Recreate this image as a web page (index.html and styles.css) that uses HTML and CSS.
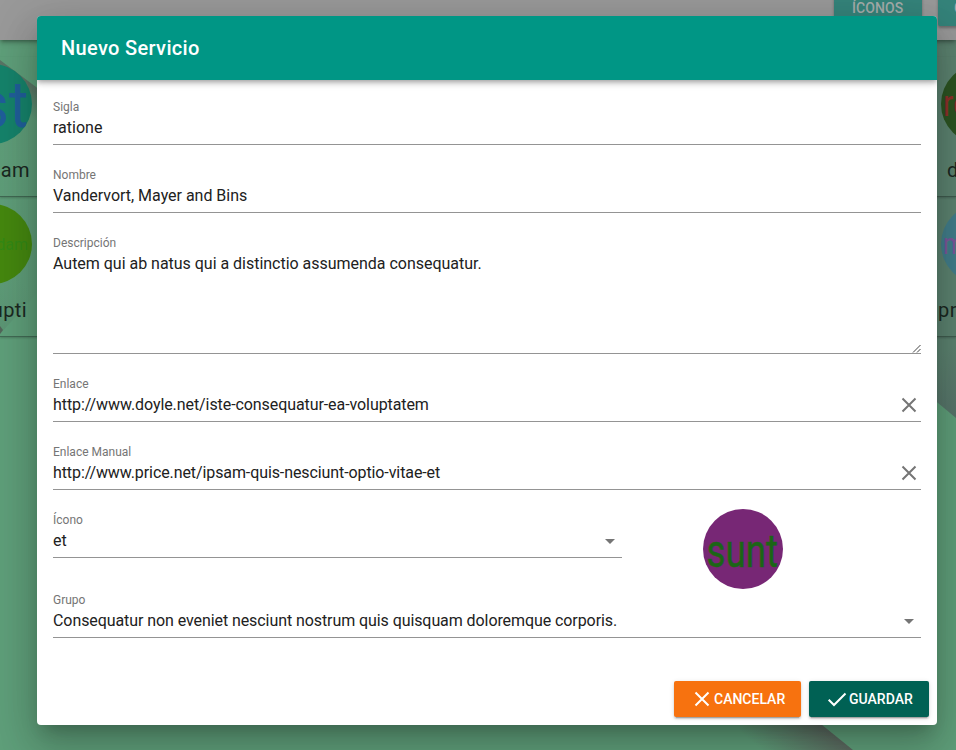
FILE: index.html
```html
<!DOCTYPE html>
<html lang="es">
<head>
<meta charset="utf-8">
<title>Nuevo Servicio</title>
<link rel="stylesheet" href="styles.css">
</head>
<body>
<div class="page">
  <svg class="scenery" viewBox="0 0 956 750" aria-hidden="true">
    <defs>
      <linearGradient id="ray" gradientUnits="userSpaceOnUse" x1="0" y1="330" x2="37" y2="290"><stop offset="0" stop-color="#4f6e5c" stop-opacity=".6"/><stop offset="1" stop-color="#5f8f72" stop-opacity=".3"/></linearGradient>
      <linearGradient id="edge" gradientUnits="userSpaceOnUse" x1="956" y1="418" x2="925" y2="360"><stop offset="0" stop-color="#57746a"/><stop offset="1" stop-color="#5c8370"/></linearGradient>
      <linearGradient id="wedge" gradientUnits="userSpaceOnUse" x1="838" y1="737" x2="802" y2="782"><stop offset="0" stop-color="#5b685f"/><stop offset="1" stop-color="#5b685f" stop-opacity="0"/></linearGradient>
      <linearGradient id="slope" gradientUnits="userSpaceOnUse" x1="20" y1="76" x2="4" y2="100"><stop offset="0" stop-color="#5a7063" stop-opacity=".9"/><stop offset="1" stop-color="#5a7063" stop-opacity="0"/></linearGradient>
    </defs>
    <path d="M0 60 60 105V268L0 334Z" fill="url(#ray)" opacity=".35"/>
    <path d="M0 60 60 105V170L0 120Z" fill="url(#slope)"/>
    <path d="M0 326 3 330 0 334Z" fill="#53675b"/>
    <path d="M800 40H956V418L800 288Z" fill="url(#edge)"/>
    <path d="M790 699 853 750H740V699Z" fill="url(#wedge)"/>
  </svg>
  <header class="topbar">
    <span class="nav-btn nav-icons">ÍCONOS</span>
    <span class="nav-btn nav-groups">GRUPOS</span>
  </header>
  <main class="board">
    <section class="card-row">
      <article class="card card-left"><div class="disc disc-teal"><span>st</span></div><p>am</p></article>
      <article class="card card-right"><div class="disc disc-forest"><span>re</span></div><p class="indent">d</p></article>
    </section>
    <section class="card-row">
      <article class="card card-left"><div class="disc disc-lime"><span>dam</span></div><p class="shift">upti</p></article>
      <article class="card card-right"><div class="disc disc-blue"><span>m</span></div><p>pr</p></article>
    </section>
  </main>
</div>

<div class="overlay">
  <form class="dialog">
    <h1 class="dialog-title">Nuevo Servicio</h1>
    <div class="dialog-body">
      <div class="field"><span class="label">Sigla</span><span class="value">ratione</span></div>
      <div class="field"><span class="label">Nombre</span><span class="value snug">Vandervort, Mayer and Bins</span></div>
      <div class="field field-area"><span class="label">Descripción</span><span class="value snug">Autem qui ab natus qui a distinctio assumenda consequatur.</span>
        <svg class="grip" viewBox="0 0 9 9"><path d="M1 8.5 8.5 1M5 8.5 8.5 5"/></svg>
      </div>
      <div class="field"><span class="label">Enlace</span><span class="value tight">http://www.doyle.net/iste-consequatur-ea-voluptatem</span>
        <svg class="icon" viewBox="0 0 24 24"><path d="M5.5 5.5 18.5 18.5M18.5 5.5 5.5 18.5"/></svg>
      </div>
      <div class="field"><span class="label">Enlace Manual</span><span class="value tighter">http://www.price.net/ipsam-quis-nesciunt-optio-vitae-et</span>
        <svg class="icon" viewBox="0 0 24 24"><path d="M5.5 5.5 18.5 18.5M18.5 5.5 5.5 18.5"/></svg>
      </div>
      <div class="icon-row">
        <div class="field field-icon"><span class="label">Ícono</span><span class="value">et</span>
          <svg class="icon caret" viewBox="0 0 24 24"><path d="M7 10l5 5 5-5z"/></svg>
        </div>
        <svg class="preview" viewBox="0 0 80 80"><circle cx="40" cy="40" r="40"/><text transform="translate(3.5 57.5) scale(.835 1.06)">sunt</text></svg>
      </div>
      <div class="field"><span class="label">Grupo</span><span class="value tight">Consequatur non eveniet nesciunt nostrum quis quisquam doloremque corporis.</span>
        <svg class="icon caret" viewBox="0 0 24 24"><path d="M7 10l5 5 5-5z"/></svg>
      </div>
    </div>
    <div class="actions">
      <button type="button" class="btn btn-cancel"><svg class="btn-icon" viewBox="0 0 24 24"><path d="M5.5 5.5 18.5 18.5M18.5 5.5 5.5 18.5"/></svg>CANCELAR</button>
      <button type="button" class="btn btn-save"><svg class="btn-icon" viewBox="0 0 24 24"><path d="M3.7 12.7 9 18 20.5 6.5"/></svg>GUARDAR</button>
    </div>
  </form>
</div>
</body>
</html>
```
FILE: styles.css
```css
* { box-sizing: border-box; }
body {
  margin: 0;
  height: 750px;
  overflow: hidden;
  font-family: Roboto, sans-serif;
  position: relative;
}
.page {
  height: 750px;
  position: relative;
  overflow: hidden;
  background: #5f9f7a;
}
.scenery { position: absolute; inset: 0; width: 956px; height: 750px; }

.topbar {
  position: relative;
  height: 40px;
  display: flex;
  justify-content: flex-end;
  align-items: flex-start;
  gap: 16px;
  background: #999;
  box-shadow: 0 2px 4px -1px rgba(0, 0, 0, .4), 0 4px 5px rgba(0, 0, 0, .1);
}
.nav-btn {
  flex: none;
  height: 36px;
  margin-top: -10px;
  line-height: 37px;
  padding-left: 18px;
  border-radius: 2px;
  background: #35847b;
  color: #a5adab;
  font-size: 14px;
  font-weight: 500;
  box-shadow: 0 2px 3px rgba(0, 0, 0, .3);
}
.nav-icons { width: 88px; letter-spacing: .1px; }
.nav-groups { width: 88px; margin-right: -70px; padding-left: 16px; }

.board { position: relative; padding-top: 17px; }
.card-row { display: flex; justify-content: space-between; height: 140px; }
.card { width: 60px; height: 140px; overflow: hidden; padding-top: 7px; border-bottom: 1px solid rgba(35, 55, 45, .5); box-shadow: 0 1px 2px rgba(0, 0, 0, .2); }
.card p { margin: 14px 0 0; font-size: 20px; line-height: 24px; color: #1b2821; letter-spacing: .4px; }
.card-left p { width: 30px; display: flex; justify-content: flex-end; }
.card-left p.shift { width: 27px; }
.card-right { padding-left: 42px; }
.card-right p.indent { padding-left: 9px; }
.disc { width: 80px; height: 80px; border-radius: 50%; overflow: hidden; display: flex; align-items: center; }
.card-left .disc { margin-left: -48px; justify-content: flex-end; }
.card-right .disc { margin-left: 3px; }
.disc-teal { background: #16836b; color: #205f9a; font-size: 62px; padding-right: 4px; }
.disc-teal span { transform: scale(.95, 1.04); transform-origin: right; }
.disc-lime { background: #45880f; color: #338a16; font-size: 16px; padding-right: 4px; }
.disc-forest { background: #2c5422; color: #8d302b; font-size: 36px; padding-left: 2px; }
.disc-blue { background: #427e8b; color: #7b579b; font-size: 29px; padding-left: 2px; }
.disc-forest span, .disc-blue span { transform: scaleX(.85); transform-origin: left; }

.overlay { position: absolute; inset: 0; padding: 16px 19px 25px 37px; }
.dialog {
  height: 709px;
  margin: 0;
  border-radius: 4px;
  overflow: hidden;
  background: #fff;
  display: flex;
  flex-direction: column;
  box-shadow: 0 11px 15px -7px rgba(0, 0, 0, .2), 0 24px 38px 3px rgba(0, 0, 0, .14), 0 9px 46px 8px rgba(0, 0, 0, .12);
}
.dialog-title {
  margin: 0;
  flex: 0 0 64px;
  padding-left: 24px;
  line-height: 64px;
  font-size: 20px;
  font-weight: 500;
  letter-spacing: .34px;
  color: #fff;
  background: #009685;
  box-shadow: 0 2px 4px -1px rgba(0, 0, 0, .2), 0 4px 5px rgba(0, 0, 0, .14), 0 1px 10px rgba(0, 0, 0, .12);
}
.dialog-body { flex: 1; padding: 17px 16px 0; }
.field {
  height: 48px;
  margin-bottom: 20px;
  display: grid;
  grid-template: 20px 22px / 1fr auto;
  border-bottom: 1px solid #949494;
  color: #212121;
}
.label { grid-column: 1 / 3; font-size: 12px; line-height: 20px; color: #757575; }
.value { font-size: 16px; line-height: 22px; white-space: nowrap; }
.snug { letter-spacing: -.02px; }
.tight { letter-spacing: -.08px; }
.tighter { letter-spacing: -.095px; }
.field-area { height: 121px; grid-template-rows: 20px 22px 1fr; }
.grip { grid-area: 3 / 2; width: 9px; height: 9px; align-self: end; }
.grip path { fill: none; stroke: #444; stroke-width: 1; }
.icon { width: 24px; height: 24px; margin-top: -1px; }
.icon path { fill: none; stroke: #757575; stroke-width: 2; }
.icon.caret path { fill: #757575; stroke: none; }
.icon-row { display: flex; align-items: flex-start; height: 81px; margin-top: -1px; }
.field-icon { flex: 0 0 569px; margin-top: 1px; }
.preview { width: 80px; height: 80px; margin-left: 81px; }
.preview circle { fill: #772775; }
.preview text { fill: #1b6516; stroke: #1b6516; stroke-width: .4; font-size: 44px; }

.actions { display: flex; justify-content: flex-end; gap: 8px; padding: 0 8px 8px; }
.btn {
  height: 36px;
  padding: 0 16px;
  display: flex;
  align-items: center;
  border: 0;
  border-radius: 2px;
  color: #fff;
  font: 500 14px/36px Roboto, sans-serif;
  box-shadow: 0 3px 1px -2px rgba(0, 0, 0, .2), 0 2px 2px rgba(0, 0, 0, .14), 0 1px 5px rgba(0, 0, 0, .12);
}
.btn-cancel { width: 127px; background: #f7720f; }
.btn-save { width: 120px; background: #006154; }
.btn-icon { width: 24px; height: 24px; flex: none; }
.btn-icon path { fill: none; stroke: #fff; stroke-width: 2; }
```
